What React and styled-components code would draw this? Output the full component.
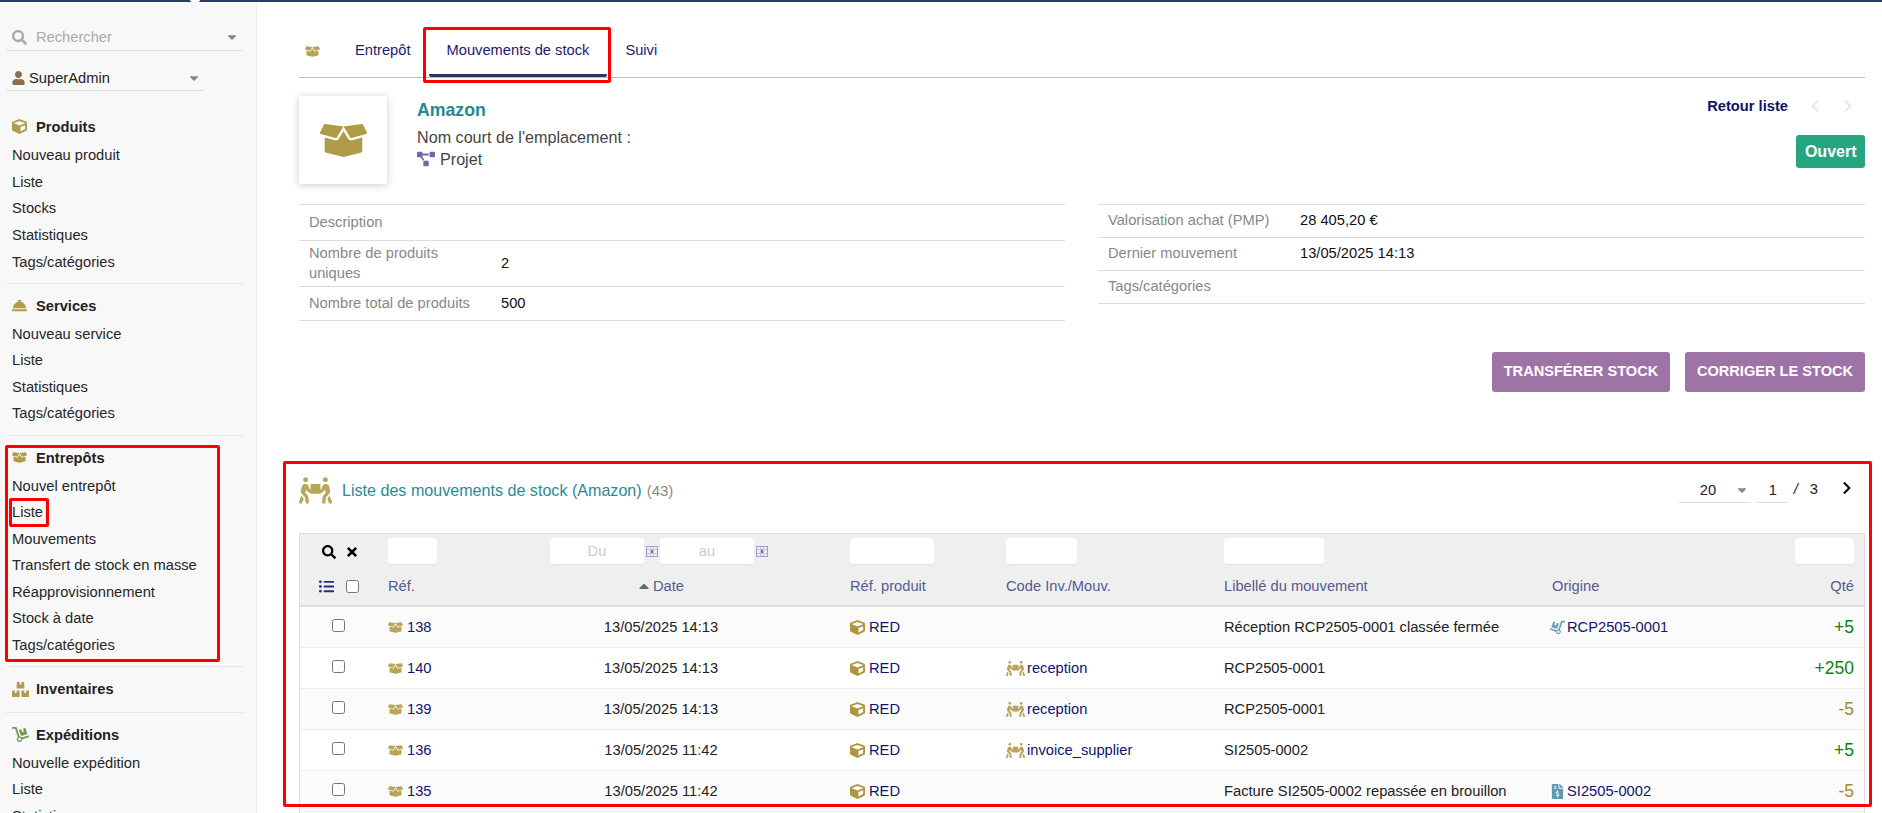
import React from "react";
import styled, { createGlobalStyle } from "styled-components";
import {
  FaBoxes,
  FaBoxOpen,
  FaCaretDown,
  FaCaretUp,
  FaChevronLeft,
  FaChevronRight,
  FaConciergeBell,
  FaCube,
  FaDolly,
  FaFileInvoiceDollar,
  FaListUl,
  FaPeopleCarry,
  FaProjectDiagram,
  FaSearch,
  FaTimes,
  FaUser
} from "react-icons/fa";

const GlobalStyle = createGlobalStyle`
  html, body {
    margin: 0;
    height: 813px;
    overflow: hidden;
    background: #fff;
    color: #222;
    font-family: "Liberation Sans", Arial, sans-serif;
    font-size: 14.7px;
  }
`;

const Page = styled.div`
  position: relative;
  height: 813px;
  overflow: hidden;
`;

const TopBar = styled.div`
  position: relative;
  height: 2px;
  background: #263c5c;

  &::after {
    content: "";
    position: absolute;
    left: 190px;
    top: 0;
    width: 10px;
    height: 2px;
    border-radius: 0 0 4px 4px;
    background: #fff;
  }
`;

const Body = styled.div`
  display: flex;
  align-items: stretch;
  height: 811px;
`;

/* sidebar */

const Sidebar = styled.nav`
  flex: 0 0 256px;
  box-sizing: content-box;
  background: #f8f8f8;
  border-right: 1px solid #ececec;
  padding-top: 22px;
`;

const SelectBox = styled.div`
  display: flex;
  align-items: center;
  box-sizing: border-box;
  width: ${(p) => p.$w}px;
  height: ${(p) => p.$h}px;
  margin: ${(p) => p.$top || 0}px 0 0 6px;
  padding: 0 4px 0 6px;
  border-bottom: 1px solid #ddd;
  border-radius: 0 0 3px 3px;
  color: ${(p) => p.$color || "#222"};
`;

const SelectGrow = styled.span`
  flex: 1;
  white-space: nowrap;
`;

const SearchIcon = styled(FaSearch)`
  width: 15px;
  height: 15px;
  margin-right: 9px;
  color: #aaa;
`;

const UserIcon = styled(FaUser)`
  width: 13px;
  height: 14px;
  margin-right: 4px;
  color: #8a6d4b;
`;

const Caret = styled(FaCaretDown)`
  width: 14px;
  height: 14px;
  color: #888;
`;

const Section = styled.section`
  padding: 7.3px 0 7.8px;
  margin: 0 13px 0 6px;
  border-bottom: ${(p) => (p.$last ? "none" : "1px solid #e6e6e6")};
`;

const Sections = styled.div`
  margin-top: 14px;
`;

const SectionTitle = styled.div`
  display: flex;
  align-items: center;
  height: 29.4px;
  padding-left: 6px;
  font-weight: 700;
  color: #222;

  ${Section}:first-child & {
    margin-bottom: 0.5px;
  }
`;

const TitleIcon = styled.span`
  display: flex;
  flex: 0 0 24px;
  align-items: center;
  color: ${(p) => p.$color || "#b09c4c"};
`;

const MenuItem = styled.div`
  height: 26.6px;
  line-height: 26.6px;
  padding-left: 6px;
  color: #262626;
  white-space: nowrap;
`;

/* main */

const Main = styled.main`
  flex: 1;
  min-width: 0;
  padding: 25px 17px 0 42px;
`;

const Tabs = styled.div`
  display: flex;
  height: 50px;
  border-bottom: 1px solid #bbb;
`;

const IconTab = styled.div`
  display: flex;
  align-items: center;
  width: 38px;
  padding: 0 0 2px 6px;
  box-sizing: border-box;
  color: #b5a452;
`;

const Tab = styled.div`
  display: flex;
  align-items: center;
  padding: 0 18px 2px;
  color: #1b1b6b;
  white-space: nowrap;
  border-bottom: 3px solid ${(p) => (p.$active ? "#263c5c" : "transparent")};
  border-radius: 0 0 2px 2px;
  height: 50px;
  box-sizing: border-box;
`;

const Header = styled.div`
  display: flex;
  justify-content: space-between;
  margin-top: 18px;
`;

const HeaderLeft = styled.div`
  display: flex;
  gap: 30px;
`;

const Card = styled.div`
  display: flex;
  align-items: center;
  justify-content: center;
  width: 88px;
  height: 88px;
  background: #fff;
  box-shadow: 0 1px 8px rgba(0, 0, 0, 0.2);
  color: #ad9b47;
`;

const HeadText = styled.div`
  font-size: 16.15px;
  color: #444;
  line-height: 22px;
`;

const Name = styled.div`
  margin: 2px 0 4px;
  font-size: 17.7px;
  font-weight: 700;
  line-height: 24px;
  color: #1f8a8f;
`;

const ProjectLine = styled.div`
  display: flex;
  align-items: center;
  gap: 5px;
  color: #444;
`;

const HeaderRight = styled.div`
  display: flex;
  flex-direction: column;
  align-items: flex-end;
`;

const BackRow = styled.div`
  display: flex;
  align-items: center;
  height: 18px;
  margin-top: 1px;
  font-weight: 700;
  color: #0f1466;
`;

const BackChevrons = styled.span`
  display: flex;
  gap: 19px;
  margin: 0 10px 0 20px;
  color: #e9e9e9;
`;

const Status = styled.div`
  box-sizing: border-box;
  display: flex;
  align-items: center;
  height: 33px;
  margin-top: 20px;
  padding: 0 8.5px;
  border-radius: 3px;
  background: #25a580;
  color: #fff;
  font-size: 16px;
  font-weight: 700;
`;

const InfoColumns = styled.div`
  display: grid;
  grid-template-columns: 766px 767px;
  justify-content: space-between;
  align-items: start;
  margin-top: 20px;
`;

const InfoTable = styled.div`
  border-top: 1px solid #ddd;
`;

const InfoRow = styled.div`
  display: grid;
  grid-template-columns: 202px 1fr;
  align-items: center;
  box-sizing: border-box;
  height: ${(p) => p.$h}px;
  padding-bottom: 2px;
  border-bottom: 1px solid #ddd;
`;

const InfoLabel = styled.div`
  padding: 0 25px 0 10px;
  line-height: 20px;
  color: #888;
`;

const InfoValue = styled.div`
  color: #111;
`;

const Actions = styled.div`
  display: flex;
  justify-content: flex-end;
  gap: 15px;
  margin-top: 31px;
`;

const ActionButton = styled.button`
  width: ${(p) => p.$w}px;
  height: 40px;
  padding: 0 0 2px;
  border: 0;
  border-radius: 3px;
  background: #9e74a7;
  color: #fff;
  font-family: inherit;
  font-size: 14.6px;
  font-weight: 700;
  text-transform: uppercase;
`;

const ListHead = styled.div`
  display: flex;
  align-items: center;
  justify-content: space-between;
  height: 28px;
  margin-top: 84px;
`;

const ListTitle = styled.div`
  display: flex;
  align-items: center;
  color: #2a8a96;
  font-size: 16.1px;
  white-space: nowrap;
`;

const ListIcon = styled(FaPeopleCarry)`
  width: 33px;
  height: 27px;
  margin-right: 10px;
  color: #b8a65a;
`;

const Count = styled.span`
  margin-left: 5px;
  font-size: 15px;
  color: #888;
`;

const Pager = styled.div`
  display: flex;
  align-items: center;
  color: #222;
`;

const PagerSelect = styled.div`
  display: flex;
  align-items: center;
  box-sizing: border-box;
  width: ${(p) => p.$w}px;
  height: 26px;
  margin-right: 4px;
  padding: ${(p) => p.$pad || 0};
  justify-content: ${(p) => (p.$center ? "center" : "space-between")};
  border-bottom: 1px solid #ddd;
  border-radius: 0 0 3px 3px;
`;

const PagerText = styled.span`
  margin: ${(p) => p.$margin};
  font-style: ${(p) => (p.$italic ? "italic" : "normal")};
`;

const PagerNext = styled(FaChevronRight)`
  width: 12px;
  height: 14px;
  margin: 0 12px 4px 23px;
  color: #111;
`;

/* movements table */

const columns = "80px 96px 366px 156px 218px 328px 243px 77px";

const Grid = styled.div`
  margin-top: 29px;
  border: 1px solid #ddd;
  border-bottom: 0;
`;

const GridHead = styled.div`
  background: #efefef;
  border-bottom: 2px solid #ddd;
`;

const FilterRow = styled.div`
  display: grid;
  grid-template-columns: ${columns};
  height: 33px;
  padding-top: 4px;
  box-sizing: border-box;
`;

const LabelRow = styled.div`
  display: grid;
  grid-template-columns: ${columns};
  align-items: center;
  height: 38px;
  color: #555a91;
`;

const FilterCell = styled.div`
  display: flex;
  align-items: flex-start;
  gap: ${(p) => p.$gap || 0}px;
  padding: ${(p) => p.$pad || "0 0 0 8px"};
  justify-content: ${(p) => (p.$center ? "center" : "flex-start")};
`;

const FilterInput = styled.input`
  box-sizing: border-box;
  width: ${(p) => p.$w}px;
  height: 27px;
  padding: 0;
  border: 0;
  border-bottom: 1px solid #e2e2e2;
  border-radius: 4px;
  background: #fff;
  font-family: inherit;
  font-size: 14.7px;
  text-align: center;

  &::placeholder {
    color: #ccc;
    opacity: 1;
  }
`;

const ToolIcons = styled.div`
  display: flex;
  align-items: center;
  gap: 9px;
  height: 27px;
  color: #000;
`;

const CalendarSlot = styled.span`
  display: flex;
  align-items: center;
  height: 27px;
`;

const LabelCell = styled.div`
  display: flex;
  align-items: center;
  gap: ${(p) => (p.$gap === undefined ? 4 : p.$gap)}px;
  padding: ${(p) => p.$pad || "0 0 0 8px"};
  justify-content: ${(p) => p.$justify || "flex-start"};
  white-space: nowrap;
`;

const SortCaret = styled(FaCaretUp)`
  width: 16px;
  height: 16px;
  color: #666;
`;

const Checkbox = styled.input.attrs({ type: "checkbox" })`
  width: 13px;
  height: 13px;
  margin: 0;
`;

const DataRow = styled.div`
  display: grid;
  grid-template-columns: ${columns};
  align-items: center;
  height: 41px;
  box-sizing: border-box;
  background: ${(p) => (p.$odd ? "#fbfbfb" : "#fff")};
  border-bottom: 1px solid #eee;
`;

const Cell = styled.div`
  display: flex;
  align-items: center;
  gap: ${(p) => p.$gap || 0}px;
  padding: ${(p) => p.$pad || "0 0 0 8px"};
  justify-content: ${(p) => p.$justify || "flex-start"};
  color: ${(p) => p.$color || "#222"};
  white-space: nowrap;
`;

const Qty = styled(Cell)`
  font-size: 17.5px;
`;

const Annotation = styled.div`
  position: absolute;
  box-sizing: border-box;
  left: ${(p) => p.$left}px;
  top: ${(p) => p.$top}px;
  width: ${(p) => p.$width}px;
  height: ${(p) => p.$height}px;
  border: 3px solid #f00;
  border-radius: 2px;
  pointer-events: none;
`;

const CalendarIcon = () => (
  <svg width="12" height="11" viewBox="0 0 12 11" fill="none">
    <rect x="0.5" y="0.5" width="11" height="10" fill="#f0eef8" stroke="#a49ed0" />
    <path d="M4.5 1v9M7.5 1v9M1 3.5h10M1 7.5h10" stroke="#c4c0e2" />
    <rect x="5" y="4" width="2" height="3" fill="#9a5cc0" />
  </svg>
);

const menu = [
  {
    title: "Produits",
    icon: <FaCube size={15} />,
    items: ["Nouveau produit", "Liste", "Stocks", "Statistiques", "Tags/catégories"]
  },
  {
    title: "Services",
    icon: <FaConciergeBell size={15} />,
    items: ["Nouveau service", "Liste", "Statistiques", "Tags/catégories"]
  },
  {
    title: "Entrepôts",
    icon: <FaBoxOpen size={15} />,
    items: [
      "Nouvel entrepôt",
      "Liste",
      "Mouvements",
      "Transfert de stock en masse",
      "Réapprovisionnement",
      "Stock à date",
      "Tags/catégories"
    ]
  },
  { title: "Inventaires", icon: <FaBoxes size={17} />, items: [] },
  {
    title: "Expéditions",
    icon: <FaDolly size={17} />,
    color: "#6f9d52",
    items: ["Nouvelle expédition", "Liste", "Statistiques"]
  }
];

const rows = [
  {
    ref: "138",
    date: "13/05/2025 14:13",
    label: "Réception RCP2505-0001 classée fermée",
    origin: "RCP2505-0001",
    originType: "reception",
    qty: "+5"
  },
  { ref: "140", date: "13/05/2025 14:13", code: "reception", label: "RCP2505-0001", qty: "+250" },
  { ref: "139", date: "13/05/2025 14:13", code: "reception", label: "RCP2505-0001", qty: "-5" },
  { ref: "136", date: "13/05/2025 11:42", code: "invoice_supplier", label: "SI2505-0002", qty: "+5" },
  {
    ref: "135",
    date: "13/05/2025 11:42",
    label: "Facture SI2505-0002 repassée en brouillon",
    origin: "SI2505-0002",
    originType: "invoice",
    qty: "-5"
  }
];

const FlippedDolly = styled(FaDolly)`
  transform: scaleX(-1);
`;

const OriginIcon = ({ type }) =>
  type === "reception" ? (
    <FlippedDolly size={15} color="#6a9fb5" />
  ) : (
    <FaFileInvoiceDollar size={15} color="#5c9ab3" />
  );

const App = () => (
  <Page>
    <GlobalStyle />
    <TopBar />
    <Body>
      <Sidebar>
        <SelectBox $w={237} $h={27} $color="#aaa">
          <SearchIcon />
          <SelectGrow>Rechercher</SelectGrow>
          <Caret />
        </SelectBox>
        <SelectBox $w={199} $h={26} $top={14}>
          <UserIcon />
          <SelectGrow>SuperAdmin</SelectGrow>
          <Caret />
        </SelectBox>
        <Sections>
          {menu.map((section, i) => (
            <Section key={section.title} $last={i === menu.length - 1}>
              <SectionTitle>
                <TitleIcon $color={section.color}>{section.icon}</TitleIcon>
                {section.title}
              </SectionTitle>
              {section.items.map((item) => (
                <MenuItem key={item}>{item}</MenuItem>
              ))}
            </Section>
          ))}
        </Sections>
      </Sidebar>

      <Main>
        <Tabs>
          <IconTab>
            <FaBoxOpen size={15} />
          </IconTab>
          <Tab>Entrepôt</Tab>
          <Tab $active>Mouvements de stock</Tab>
          <Tab>Suivi</Tab>
        </Tabs>

        <Header>
          <HeaderLeft>
            <Card>
              <FaBoxOpen size={47} />
            </Card>
            <HeadText>
              <Name>Amazon</Name>
              <div>Nom court de l'emplacement :</div>
              <ProjectLine>
                <FaProjectDiagram size={18} color="#6c6aa8" />
                Projet
              </ProjectLine>
            </HeadText>
          </HeaderLeft>
          <HeaderRight>
            <BackRow>
              Retour liste
              <BackChevrons>
                <FaChevronLeft size={14} />
                <FaChevronRight size={14} />
              </BackChevrons>
            </BackRow>
            <Status>Ouvert</Status>
          </HeaderRight>
        </Header>

        <InfoColumns>
          <InfoTable>
            <InfoRow $h={36}>
              <InfoLabel>Description</InfoLabel>
            </InfoRow>
            <InfoRow $h={46}>
              <InfoLabel>Nombre de produits uniques</InfoLabel>
              <InfoValue>2</InfoValue>
            </InfoRow>
            <InfoRow $h={34}>
              <InfoLabel>Nombre total de produits</InfoLabel>
              <InfoValue>500</InfoValue>
            </InfoRow>
          </InfoTable>
          <InfoTable>
            <InfoRow $h={33}>
              <InfoLabel>Valorisation achat (PMP)</InfoLabel>
              <InfoValue>28 405,20 €</InfoValue>
            </InfoRow>
            <InfoRow $h={33}>
              <InfoLabel>Dernier mouvement</InfoLabel>
              <InfoValue>13/05/2025 14:13</InfoValue>
            </InfoRow>
            <InfoRow $h={33}>
              <InfoLabel>Tags/catégories</InfoLabel>
            </InfoRow>
          </InfoTable>
        </InfoColumns>

        <Actions>
          <ActionButton $w={178}>Transférer stock</ActionButton>
          <ActionButton $w={180}>Corriger le stock</ActionButton>
        </Actions>

        <ListHead>
          <ListTitle>
            <ListIcon />
            Liste des mouvements de stock (Amazon)
            <Count>(43)</Count>
          </ListTitle>
          <Pager>
            <PagerSelect $w={74} $pad="0 3px 0 22px">
              20
              <Caret />
            </PagerSelect>
            <PagerSelect $w={34} $center>
              1
            </PagerSelect>
            <PagerText $italic $margin="0 0 2px 0">
              /
            </PagerText>
            <PagerText $margin="0 0 2px 12px">3</PagerText>
            <PagerNext />
          </Pager>
        </ListHead>

        <Grid>
          <GridHead>
            <FilterRow>
              <FilterCell $pad="0 0 0 22px">
                <ToolIcons>
                  <FaSearch size={14} />
                  <FaTimes size={14} />
                </ToolIcons>
              </FilterCell>
              <FilterCell>
                <FilterInput $w={49} />
              </FilterCell>
              <FilterCell $center $gap={2} $pad="0">
                <FilterInput $w={94} placeholder="Du" />
                <CalendarSlot>
                  <CalendarIcon />
                </CalendarSlot>
                <FilterInput $w={94} placeholder="au" />
                <CalendarSlot>
                  <CalendarIcon />
                </CalendarSlot>
              </FilterCell>
              <FilterCell>
                <FilterInput $w={84} />
              </FilterCell>
              <FilterCell>
                <FilterInput $w={71} />
              </FilterCell>
              <FilterCell>
                <FilterInput $w={100} />
              </FilterCell>
              <FilterCell />
              <FilterCell>
                <FilterInput $w={59} />
              </FilterCell>
            </FilterRow>
            <LabelRow>
              <LabelCell $pad="0 0 0 19px" $gap={12}>
                <FaListUl size={15} color="#2b2c7e" />
                <Checkbox />
              </LabelCell>
              <LabelCell>Réf.</LabelCell>
              <LabelCell $justify="center" $gap={1} $pad="0 0 0 2px">
                <SortCaret />
                Date
              </LabelCell>
              <LabelCell>Réf. produit</LabelCell>
              <LabelCell>Code Inv./Mouv.</LabelCell>
              <LabelCell>Libellé du mouvement</LabelCell>
              <LabelCell>Origine</LabelCell>
              <LabelCell $pad="0 10px 0 0" $justify="flex-end">
                Qté
              </LabelCell>
            </LabelRow>
          </GridHead>

          {rows.map((row, i) => (
            <DataRow key={row.ref} $odd={i % 2 === 0}>
              <Cell $pad="0 0 3px 32px">
                <Checkbox />
              </Cell>
              <Cell $gap={4} $color="#10146e">
                <FaBoxOpen size={15} color="#b8a558" />
                {row.ref}
              </Cell>
              <Cell $justify="center" $pad="0 0 0 4px">
                {row.date}
              </Cell>
              <Cell $gap={4} $color="#10146e">
                <FaCube size={15} color="#ae9640" />
                RED
              </Cell>
              <Cell $gap={2} $color="#10146e">
                {row.code && (
                  <>
                    <FaPeopleCarry size={19} color="#b8a558" />
                    {row.code}
                  </>
                )}
              </Cell>
              <Cell>{row.label}</Cell>
              <Cell $pad="0 0 0 6px" $gap={2} $color="#10146e">
                {row.origin && (
                  <>
                    <OriginIcon type={row.originType} />
                    {row.origin}
                  </>
                )}
              </Cell>
              <Qty $pad="0 10px 0 0" $justify="flex-end" $color={row.qty[0] === "+" ? "#0a850a" : "#a68a2e"}>
                {row.qty}
              </Qty>
            </DataRow>
          ))}
          <DataRow />
        </Grid>
      </Main>
    </Body>

    <Annotation $left={5} $top={445} $width={215} $height={217} />
    <Annotation $left={9} $top={498} $width={40} $height={29} />
    <Annotation $left={423} $top={27} $width={188} $height={56} />
    <Annotation $left={283} $top={461} $width={1589} $height={346} />
  </Page>
);

export default App;
